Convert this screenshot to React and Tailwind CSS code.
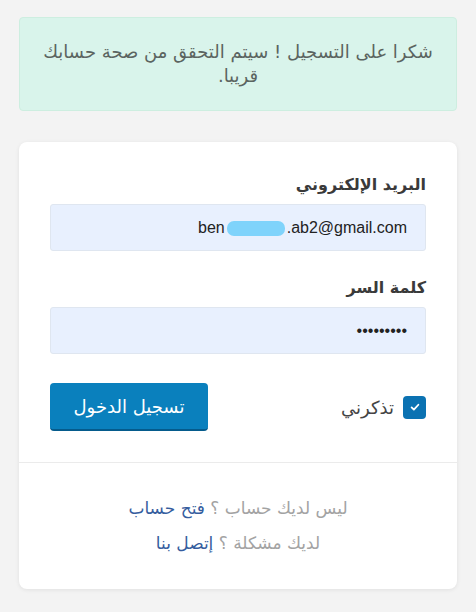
import React from "react";

const arabic = { fontFamily: '"DejaVu Sans", "Noto Sans", sans-serif' };

function CheckIcon() {
    return (
        <svg viewBox="0 0 16 16" className="h-[12px] w-[12px]" fill="none" stroke="white" strokeWidth="2.4" strokeLinecap="round" strokeLinejoin="round">
            <path d="M3.5 8.5l3 3 6-6.5" />
        </svg>
    );
}

export default function App() {
    return (
        <div dir="rtl" className="min-h-[612px] w-full bg-[#f3f3f3] px-[19px] pt-[17px] pb-6" style={arabic}>
            <div className="rounded-[4px] border border-[#cdeee0] bg-[#d9f4eb] px-[18px] pt-[22px] pb-[22px] text-center text-[18px] leading-[24px] text-[#5b6460]">
                شكرا على التسجيل ! سيتم التحقق من صحة حسابك قريبا.
            </div>

            <div className="mt-[31px] rounded-[8px] bg-white shadow-[0_1px_4px_rgba(0,0,0,0.08)]">
                <div className="px-[31px] pt-[32px] pb-[31px]">
                    <label className="block text-[16px] font-bold leading-[22px] text-[#3a3a3a]">البريد الإلكتروني</label>
                    <div className="mt-[8px] flex h-[47px] items-center rounded-[3px] border border-[#dfe6f0] bg-[#e8f0fe] px-[18px]">
                        <span dir="ltr" className="flex items-center text-[16px] text-[#222]" style={{ fontFamily: '"Liberation Sans", Arial, sans-serif' }}>
                            <span>ben</span>
                            <span className="mx-[2px] mt-[2px] inline-block h-[15px] w-[58px] rounded-[7px] bg-[#7fd3fb]"></span>
                            <span>.ab2@gmail.com</span>
                        </span>
                    </div>

                    <label className="mt-[26px] block text-[16px] font-bold leading-[22px] text-[#3a3a3a]">كلمة السر</label>
                    <div className="mt-[8px] flex h-[47px] items-center rounded-[3px] border border-[#dfe6f0] bg-[#e8f0fe] px-[18px]">
                        <span className="text-[16px] text-[#222]" style={{ fontFamily: '"Liberation Sans", Arial, sans-serif' }}>•••••••••</span>
                    </div>

                    <div className="mt-[29px] flex items-center justify-between">
                        <label className="flex items-center gap-[9px]">
                            <span className="flex h-[23px] w-[23px] items-center justify-center rounded-[4px] bg-[#0b72b2]">
                                <CheckIcon />
                            </span>
                            <span className="text-[18px] text-[#444]">تذكرني</span>
                        </label>
                        <button className="h-[48px] w-[158px] rounded-[4px] border-b-[2px] border-[#055b8c] bg-[#0a80bd] text-[18px] text-white">
                            تسجيل الدخول
                        </button>
                    </div>
                </div>

                <div className="border-t border-[#ebebeb] px-6 pt-[28px] pb-[28px] text-center text-[17px] leading-[35px] text-[#a3a3a3]">
                    <p>ليس لديك حساب ؟ <a className="text-[#355d9e]">فتح حساب</a></p>
                    <p>لديك مشكلة ؟ <a className="text-[#355d9e]">إتصل بنا</a></p>
                </div>
            </div>
        </div>
    );
}
